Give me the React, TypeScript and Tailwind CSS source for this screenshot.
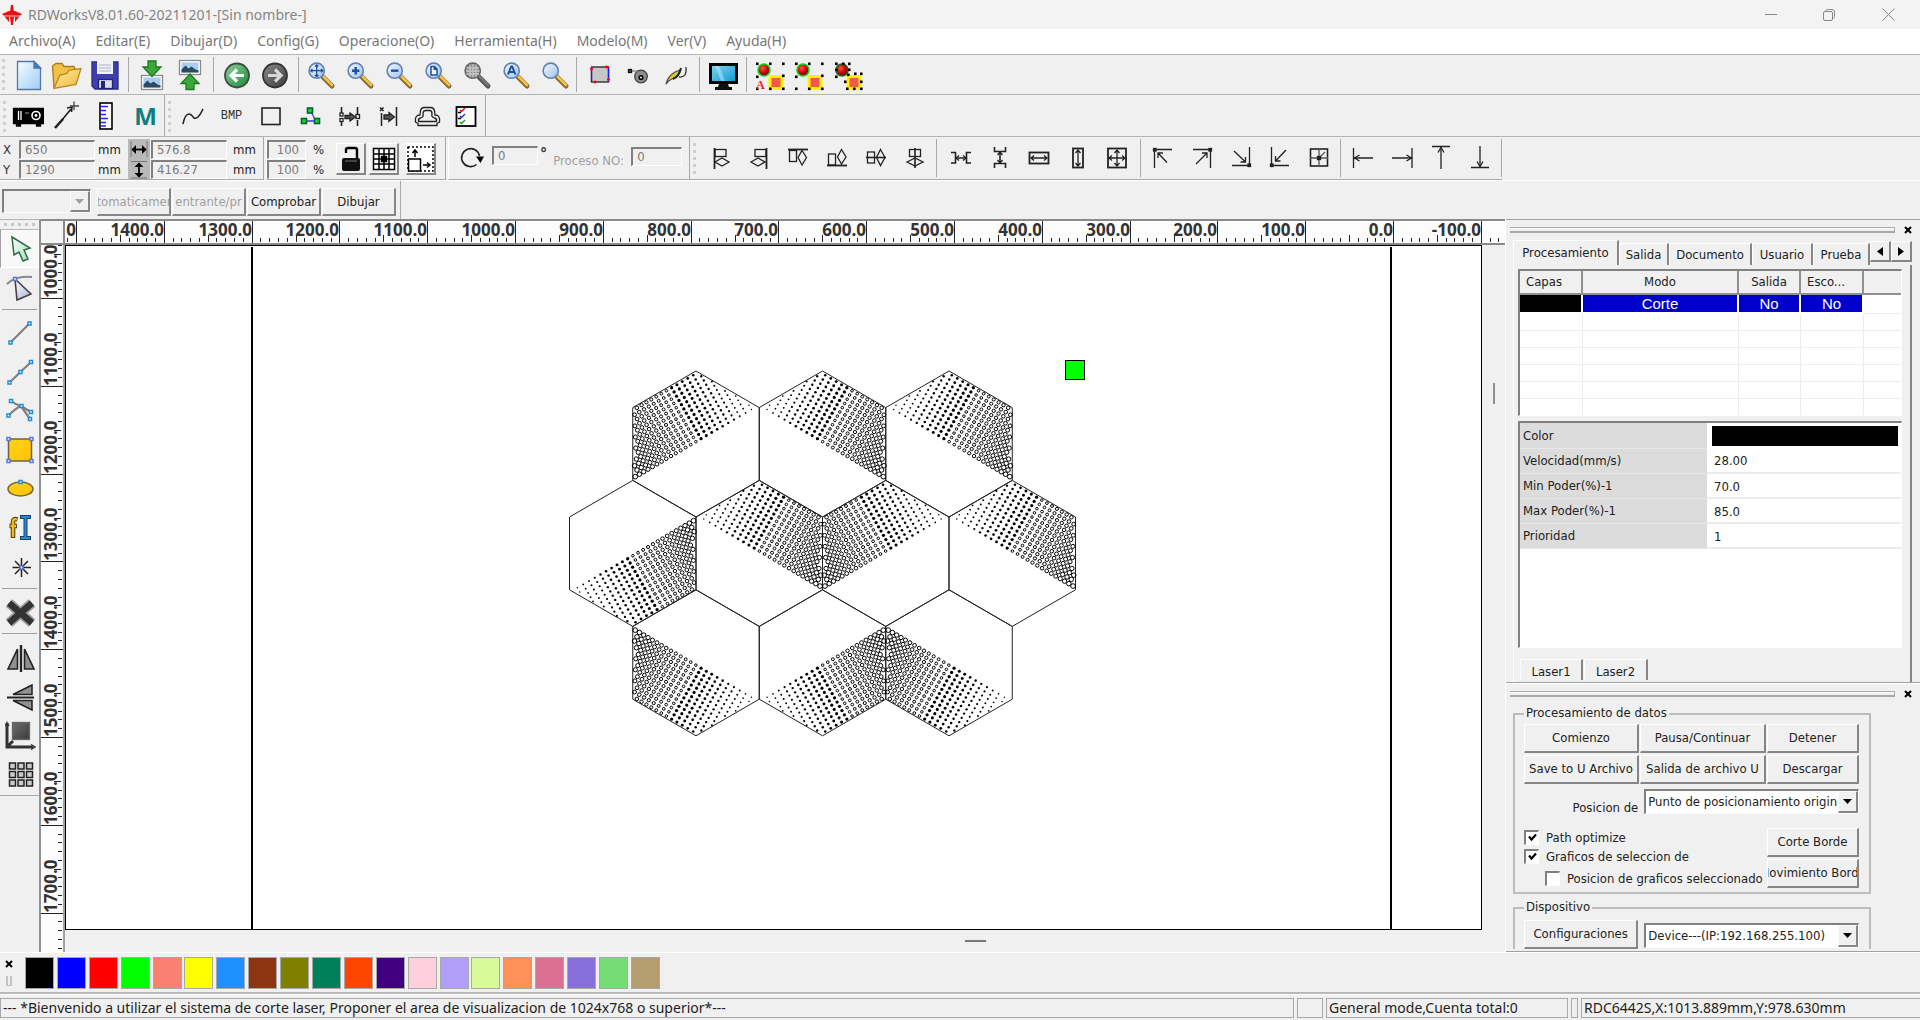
import React, { useState } from "react";

const UI = "font-['DejaVu_Sans_Condensed','DejaVu_Sans',sans-serif]";
const RAISED = "border-t border-l border-t-white border-l-white border-r-2 border-b-2 border-r-[#868686] border-b-[#868686]";
const SUNKEN = "border-t-2 border-l-2 border-t-[#808080] border-l-[#808080] border-r border-b border-r-white border-b-white";

type Kids = { children?: React.ReactNode };

function Icon({ children, size = 32 }: Kids & { size?: number }) {
  return (
    <svg width={size} height={size} viewBox={`0 0 ${size} ${size}`} fill="none" stroke="#222" strokeWidth="1.3" className="block shrink-0">
      {children}
    </svg>
  );
}

function Tool({ label, wide, children }: Kids & { label: string; wide?: boolean }) {
  return (
    <button type="button" aria-label={label} title={label} className={`flex shrink-0 items-center justify-center ${wide ? "w-[39px]" : "w-[38px]"}`}>
      {children}
    </button>
  );
}

function Group({ children, snug }: Kids & { snug?: boolean }) {
  return <div className={`my-[2px] flex border-r border-r-[#a8a8a8] ${snug ? "px-[2px]" : "px-1"}`}>{children}</div>;
}

function Grip({ slim }: { slim?: boolean }) {
  return (
    <div className={`flex shrink-0 flex-col items-center justify-center gap-1 ${slim ? "w-[6px]" : "w-2"}`}>
      {[0, 1, 2, 3, 4].map((i) => <span key={i} className="h-[3px] w-[3px] bg-[#cfcfcf]" />)}
    </div>
  );
}

/* ---------- standard toolbar ---------- */

function Lens({ gray, children }: Kids & { gray?: boolean }) {
  return (
    <Icon>
      <path d="M18 18 L27 27" stroke={gray ? "#555" : "#8a6a2c"} strokeWidth="5" strokeLinecap="round" />
      <path d="M18.5 17.5 L27 26" stroke={gray ? "#777" : "#f3c24d"} strokeWidth="2.6" strokeLinecap="round" />
      <circle cx="11.7" cy="11.7" r="7.6" fill={gray ? "#8e8e8e" : "url(#lensFill)"} stroke={gray ? "#666" : "#6580b8"} strokeWidth="1.6" />
      {children}
    </Icon>
  );
}

function Picture({ y }: { y: number }) {
  return (
    <g>
      <rect x="5.5" y={y + 0.5} width="21" height="14" fill="#fff" stroke="#8a8a8a" />
      <rect x="7.5" y={y + 2.5} width="17" height="10" fill="#a8cdf0" stroke="none" />
      <path d={`M7.5 ${y + 12.5} v-3 l4 -4 l3 3 l3 -2 l4 3 l3 1 v2z`} fill="#2d4a63" stroke="none" />
    </g>
  );
}

function Selection({ kind }: { kind: number }) {
  const near = kind === 2;
  const dots = near
    ? [[5, 5], [12, 5], [18, 5], [5, 11], [18, 11], [5, 18], [17, 16], [24, 15], [30, 15], [14, 23], [30, 23], [16, 30], [23, 30], [30, 30]]
    : [[4, 5], [17, 5], [30, 5], [4, 18], [30, 17], [4, 30], [17, 30], [30, 30]];
  return (
    <Icon>
      <circle cx="11" cy="11" r="6" fill="url(#ball)" stroke={near ? "#1c6a1c" : "#19d119"} strokeWidth="1.6" />
      <rect x="17" y="17.5" width="12" height="12" fill="#f4574b" stroke="#fff200" strokeWidth="3" />
      {dots.map(([x, y]) => <rect key={`${x}-${y}`} x={x - 1} y={y - 1.5} width="2.6" height="2.6" fill="#000" stroke="none" />)}
      {kind === 0 && (
        <text x="3" y="30" fontSize="12" fontWeight="700" fill="#f02020" stroke="none" fontFamily="Liberation Serif, serif">A</text>
      )}
    </Icon>
  );
}

function MainToolbar() {
  return (
    <div className="flex h-[41px] border-t border-b border-t-[#b4b4b4] border-b-[#b4b4b4]">
      <Grip slim />
      <Group>
        <Tool label="Nuevo">
          <Icon>
            <path d="M4.5 2.5 H21 L27.5 9 V30.5 H4.5z" fill="url(#pageFill)" stroke="#5577a8" />
            <path d="M21 2.5 V9 H27.5z" fill="#3f7fd0" stroke="#4472b0" />
          </Icon>
        </Tool>
        <Tool label="Abrir">
          <Icon>
            <path d="M3 29 L1.5 7 L5 4.5 H11 L13 7.5 H23 L24 10" fill="#f1c046" stroke="#a87b1c" />
            <path d="M3 29.5 L9 16 L16 14.5 L18 11 L30 9.5 L25 25.5z" fill="url(#folderFill)" stroke="#b58820" />
          </Icon>
        </Tool>
        <Tool label="Guardar">
          <Icon>
            <path d="M3 3 H29 V30 H6 L3 27z" fill="#3d3fae" stroke="#2a2b86" />
            <rect x="8" y="2" width="16" height="13" fill="#f1f3f8" stroke="none" />
            <path d="M10 6 H22 M10 9 H22 M10 12 H22" stroke="#c4c8d4" />
            <rect x="9.5" y="20.5" width="14" height="9" fill="#d9dcea" stroke="#23246e" />
            <rect x="12" y="22" width="4" height="7" fill="#23246e" stroke="none" />
          </Icon>
        </Tool>
      </Group>
      <Group>
        <Tool label="Importar">
          <Icon>
            <Picture y={16} />
            <path d="M12 2 H20 V8 H25 L16 17.5 L7 8 H12z" fill="#3aa83a" stroke="#1c7a1c" />
          </Icon>
        </Tool>
        <Tool label="Exportar">
          <Icon>
            <Picture y={1} />
            <path d="M12 30.5 H20 V24.5 H25 L16 15 L7 24.5 H12z" fill="#3aa83a" stroke="#1c7a1c" />
          </Icon>
        </Tool>
      </Group>
      <Group>
        <Tool label="Deshacer">
          <Icon>
            <circle cx="16" cy="16.5" r="12" fill="url(#greenDisc)" stroke="#3d4a40" strokeWidth="1.8" />
            <path d="M23 16.5 H11 M16 10.5 L10 16.5 L16 22.5" stroke="#fff" strokeWidth="3.2" />
          </Icon>
        </Tool>
        <Tool label="Rehacer">
          <Icon>
            <circle cx="16" cy="16.5" r="12" fill="url(#grayDisc)" stroke="#333" strokeWidth="1.8" />
            <path d="M9 16.5 H21 M16 10.5 L22 16.5 L16 22.5" stroke="#d8d8d8" strokeWidth="3.2" />
          </Icon>
        </Tool>
      </Group>
      <Group snug>
        <Tool wide label="Mover">
          <Lens><path d="M11.7 6 V17.4 M6 11.7 H17.4 M10 7.5 l1.7 -1.7 l1.7 1.7 M10 16 l1.7 1.7 l1.7 -1.7 M7.5 10 l-1.7 1.7 l1.7 1.7 M16 10 l1.7 1.7 l-1.7 1.7" stroke="#1f4f9e" /></Lens>
        </Tool>
        <Tool wide label="Acercar"><Lens><path d="M11.7 8 V15.4 M8 11.7 H15.4" stroke="#1f4f9e" strokeWidth="2.4" /></Lens></Tool>
        <Tool wide label="Alejar"><Lens><path d="M8 11.7 H15.4" stroke="#1f4f9e" strokeWidth="2.4" /></Lens></Tool>
        <Tool wide label="Ver página"><Lens><path d="M9 7.5 H12.5 L15 10 V16 H9z M12.3 7.5 V10.2 H15" stroke="#1f4f9e" fill="#eef5ff" strokeWidth="1.5" /></Lens></Tool>
        <Tool wide label="Ver datos"><Lens gray><path d="M9 5.5 V18 M12 5 V18.5 M15 5.5 V18 M5.5 9 H18 M5 12 H18.5 M5.5 15 H18" stroke="#c8c8c8" /></Lens></Tool>
        <Tool wide label="Ver todo"><Lens><path d="M8 15.5 L11.2 7.5 H12.2 L15.4 15.5 M9.3 13 H14" stroke="#1f4f9e" strokeWidth="2" /></Lens></Tool>
        <Tool wide label="Zoom"><Lens /></Tool>
      </Group>
      <Group>
        <Tool label="Marco">
          <Icon>
            <rect x="7.5" y="8" width="17" height="15" fill="#c6c6c6" stroke="#222" />
            <path d="M7.5 8 V23 M24.5 8 V23" stroke="#1a1aff" />
            <path d="M6 10 h3 M7.5 8.5 v3 M21 8 h4 M22.5 6.5 v3 M9.500 23 h3 M11 21.500 v3 M23 20.5 h3 M24.5 19 v3" stroke="#f00" />
          </Icon>
        </Tool>
        <Tool label="Velocidad">
          <Icon>
            <circle cx="19" cy="17.5" r="6.3" fill="#8c8c8c" stroke="#444" />
            <circle cx="19" cy="18.5" r="1.8" fill="#eee" stroke="#000" strokeWidth="1.6" />
            <path d="M10 12 H16" stroke="#888" />
            <rect x="6.5" y="10.5" width="3" height="3" fill="#555" stroke="#111" />
          </Icon>
        </Tool>
        <Tool label="Lápiz">
          <Icon>
            <path d="M6 25 Q8 17 15 13 L20 11 Q18 18 12 20 Q9 21 6 25z" fill="#d8cc20" stroke="#555" />
            <path d="M13 20 Q19 18 21 9" stroke="#222" strokeWidth="2" />
            <path d="M19 18 Q27 19 26 8" stroke="#333" />
          </Icon>
        </Tool>
      </Group>
      <Group>
        <Tool label="Vista previa">
          <Icon>
            <rect x="3.5" y="5.5" width="26" height="18" fill="url(#screen)" stroke="#050505" strokeWidth="3" />
            <path d="M12 7 L18 22 H14 L8 7z" fill="#fff" opacity=".35" stroke="none" />
            <path d="M12 25 H21 L22 28 H25 V31 H8 V28 H11z" fill="#111" stroke="none" />
          </Icon>
        </Tool>
      </Group>
      <div className="flex px-[2px]">
        <Tool wide label="Ruta automática"><Selection kind={0} /></Tool>
        <Tool wide label="Ruta manual"><Selection kind={1} /></Tool>
        <Tool wide label="Ruta cercana"><Selection kind={2} /></Tool>
      </div>
    </div>
  );
}

/* ---------- drawing aids toolbar ---------- */

function EditToolbar() {
  return (
    <div className="flex h-[42px] border-b border-b-[#b4b4b4]">
      <div className="flex border-r border-r-[#a8a8a8] pt-[1px]">
        <Grip />
        <Tool wide label="Proyector">
          <Icon>
            <path d="M1.5 8.5 H31.5 V23.5 H28.5 V26 H24.5 V23.5 H8.5 V26 H4.5 V23.5 H1.5z" fill="#000" stroke="#000" />
            <path d="M6.5 11 V20 M9 11 V20" stroke="#fff" />
            <circle cx="24" cy="15.5" r="4" fill="#000" stroke="#fff" strokeWidth="1.6" />
            <circle cx="24" cy="15.5" r="1.4" fill="#fff" stroke="none" />
            <path d="M13 13 h4" stroke="#777" />
          </Icon>
        </Tool>
        <Tool wide label="Punta">
          <Icon>
            <path d="M4 28 L12 19" strokeWidth="2.6" />
            <path d="M11 20 L20 9 M16 8 L21 7 L20.5 12" strokeWidth="1.6" />
            <path d="M23 1.5 V10 M19 6 H28" stroke="#444" />
          </Icon>
        </Tool>
        <Tool wide label="Regla">
          <Icon>
            <rect x="10" y="3" width="12" height="26" fill="#fff" stroke="#000" strokeWidth="1.6" />
            <path d="M11 6.5 h7 M11 10.5 h5 M11 14.5 h5 M11 18.5 h7 M11 22.5 h5 M11 26 h5" stroke="#22f" />
          </Icon>
        </Tool>
        <Tool wide label="Medida">
          <span className="pl-[2px] font-['Open_Sans',sans-serif] text-2xl font-bold text-[#0b8080]">M</span>
        </Tool>
      </div>
      <div className="flex border-r border-r-[#a8a8a8] pt-[1px]">
        <Grip />
        <Tool wide label="Curva"><Icon><path d="M6 24 Q8 14 12 14 Q14 14 17 18 Q21 20 26 9" strokeWidth="1.6" /></Icon></Tool>
        <Tool wide label="BMP"><span className="font-['Liberation_Mono',monospace] text-xs text-[#333]">BMP</span></Tool>
        <Tool wide label="Rectángulo"><Icon><rect x="7" y="8" width="18" height="16.5" strokeWidth="1.6" /></Icon></Tool>
        <Tool wide label="Nodos">
          <Icon>
            <path d="M16 10 L22 21 H10" stroke="#33f" />
            {[[13.5, 8], [7.5, 18.5], [20.5, 18.5]].map(([x, y]) => <rect key={x} x={x} y={y} width="5" height="5" fill="#1fd01f" stroke="#063" strokeWidth="1.6" />)}
          </Icon>
        </Tool>
        <Tool wide label="Unir">
          <Icon>
            <path d="M8.5 7 V13 M8.5 20 V26 M24.5 7 V14 M24.5 20 V26" strokeWidth="1.6" />
            <rect x="7" y="13" width="3" height="3" fill="#fff" /><rect x="7" y="18.5" width="3" height="3" fill="#fff" /><rect x="23" y="14.5" width="3.5" height="4" />
            <path d="M12 15.5 H17 V13 L22.5 17 L17 21 V18.5 H12z" fill="#555" />
          </Icon>
        </Tool>
        <Tool wide label="Desplazar">
          <Icon>
            <path d="M9.5 13 V26 M24.5 7 V26 M8 7.5 l3.5 3.5 M11.5 7.5 l-3.5 3.5" strokeWidth="1.5" />
            <path d="M12 15 H17 V12.5 L22.5 17 L17 21.5 V19 H12z" fill="#555" />
          </Icon>
        </Tool>
        <Tool wide label="Contorno">
          <Icon>
            <path d="M9 15 Q9 7.500 13 7.500 H20 Q24 7.500 24 15 Q29.500 15 28.500 22 L26 23.500 V25.500 H7 V23.500 L4.500 22 Q3.500 15 9 15z" />
            <path d="M9.500 18 Q13 17 12 13.500 Q12 10.500 15 10.500 H18.500 Q21 10.500 21 13.500 Q20 17 23.500 18 Q26 18.500 25.500 21.500 H7.500 Q7 18.500 9.500 18z" />
          </Icon>
        </Tool>
        <Tool wide label="Lista">
          <Icon>
            <rect x="6.500" y="7" width="19" height="19" fill="#fff" stroke="#000" strokeWidth="1.8" />
            <path d="M10 10 l1.500 1.500 l3.500 -3.500" stroke="#e00" /><path d="M10 16 l1.500 1.500 l3.500 -3.500" stroke="#22f" /><path d="M10 22 l1.500 1.500 l3.500 -3.500" stroke="#0a0" />
            <path d="M8 12.500 h3 M8 18.500 h3" stroke="#000" />
          </Icon>
        </Tool>
      </div>
    </div>
  );
}

/* ---------- coordinates and alignment ---------- */

function Field({ label, value, w }: { label: string; value: string; w: string }) {
  return (
    <input aria-label={label} defaultValue={value} className={`${w} ${SUNKEN} h-[19px] min-w-0 bg-[#f0f0f0] px-1 text-[13px] leading-none text-[#7b7b7b] outline-none`} />
  );
}

function Pair({ children, className = "" }: Kids & { className?: string }) {
  return <div className={`grid auto-rows-[19px] gap-[1px] leading-[19px] ${className}`}>{children}</div>;
}

function ArrowHead({ x, y, dx, dy }: { x: number; y: number; dx: number; dy: number }) {
  return <path d={`M${x - dx * 5 + dy * 3} ${y - dy * 5 + dx * 3} L${x} ${y} L${x - dx * 5 - dy * 3} ${y - dy * 5 - dx * 3}`} />;
}

const ALIGN_ICONS: [string, React.ReactNode][] = [
  ["Alinear izquierda", <><path d="M10.500 6 V27" strokeWidth="1.8" /><rect x="11" y="7.500" width="11" height="7" /><path d="M11 20 L18 16 L25 20 L18 24z" /></>],
  ["Alinear derecha", <><path d="M23.500 6 V27" strokeWidth="1.8" /><rect x="12" y="7.500" width="11" height="7" /><path d="M8 20 L15 16 L22 20 L15 24z" /></>],
  ["Alinear arriba", <><path d="M6 7.500 H26" strokeWidth="1.8" /><rect x="7.500" y="8.500" width="7" height="11" /><path d="M20 8.500 L24.500 15.500 L20 23 L16 15.500z" /></>],
  ["Alinear abajo", <><path d="M6 23.500 H26" strokeWidth="1.8" /><rect x="7.500" y="12" width="7" height="11" /><path d="M20.500 7.500 L25 15 L20.500 22 L16.500 15z" /></>],
  ["Centrar horizontal", <><path d="M6 15.500 H26" strokeWidth="1.6" /><rect x="7.500" y="10" width="7" height="11" /><path d="M20.500 7.500 L25 15.500 L20.500 23.500 L16.500 15.500z" /></>],
  ["Centrar vertical", <><path d="M16 6 V26" strokeWidth="1.600" /><rect x="10.500" y="7.500" width="11" height="7" /><path d="M8 20 L16 16 L24 20 L16 24z" /></>],
];

const SPACE_ICONS: [string, React.ReactNode][] = [
  ["Distribuir horizontal", <><path d="M6 10.500 H10.500 V21 H6 M26 10.500 H21.500 V21 H26 M11 16 H21" strokeWidth="1.600" /><path d="M14 13.500 L11 16 L14 18.500 M18 13.500 L21 16 L18 18.500" /></>],
  ["Distribuir vertical", <><path d="M10.500 5 V9.500 H21.500 V5 M10.500 26 V21.500 H21.500 V26 M16 10 V21" strokeWidth="1.600" /><path d="M13.500 13 L16 10 L18.500 13 M13.500 18 L16 21 L18.500 18" /></>],
  ["Mismo ancho", <><rect x="6.500" y="10.500" width="19" height="11" strokeWidth="1.800" /><path d="M8 16 H24 M11 13.500 L8 16 L11 18.500 M21 13.500 L24 16 L21 18.500" /></>],
  ["Mismo alto", <><rect x="11" y="6.500" width="10" height="19" strokeWidth="1.800" /><path d="M16 8 V24 M13.500 11 L16 8 L18.500 11 M13.500 21 L16 24 L18.500 21" /></>],
  ["Mismo tamaño", <><rect x="7" y="6.500" width="18" height="19" strokeWidth="1.800" /><path d="M16 8 V24 M8 16 H24 M13.500 11 L16 8 L18.500 11 M13.500 21 L16 24 L18.500 21 M11 13.500 L8 16 L11 18.500 M21 13.500 L24 16 L21 18.500" /></>],
];

const CORNER_ICONS: [string, React.ReactNode][] = [
  ["Esquina superior izquierda", <><path d="M7.500 26 V7.500 H25" /><path d="M20 20.500 L11 11 M11 16 V11 H16" /><rect x="6.500" y="6.500" width="2.500" height="2.500" fill="#222" /></>],
  ["Esquina superior derecha", <><path d="M24.500 26 V7.500 H7" /><path d="M10 22 L21 11 M16 11 H21 V16" /><rect x="23" y="6.500" width="2.500" height="2.500" fill="#222" /></>],
  ["Esquina inferior derecha", <><path d="M24.500 5 V23.500 H7" /><path d="M9 9 L20.500 20 M20.500 15 V20 H15.500" /><rect x="23" y="22" width="2.500" height="2.500" fill="#222" /></>],
  ["Esquina inferior izquierda", <><path d="M7.500 5 V23.500 H25" /><path d="M22 8 L11.500 19 M11.500 14 V19 H16.500" /><rect x="6.500" y="22" width="2.500" height="2.500" fill="#222" /></>],
  ["Centro", <><rect x="7.500" y="7" width="17" height="17" strokeWidth="1.600" /><path d="M16 7 V24 M7 16 H25 M22 10 L16 16" stroke="#555" /><rect x="14.500" y="14.500" width="3" height="3" fill="#222" /></>],
];

const EDGE_ICONS: [string, React.ReactNode][] = [
  ["Borde izquierdo", <><path d="M6.500 6 V26 M7 16 H26" /><ArrowHead x={7.500} y={16} dx={-1} dy={0} /></>],
  ["Borde derecho", <><path d="M26 6 V26 M6 16 H26" /><ArrowHead x={25.500} y={16} dx={1} dy={0} /></>],
  ["Borde superior", <><path d="M7 4.500 H25 M16 5 V27" /><ArrowHead x={16} y={5.500} dx={0} dy={-1} /></>],
  ["Borde inferior", <><path d="M7 25.500 H25 M16 4 V25" /><ArrowHead x={16} y={24.500} dx={0} dy={1} /></>],
];

function CoordBar() {
  return (
    <div className={`${UI} flex h-[43px] text-[13px]`}>
      <div className="flex items-center border-r border-b border-[#a8a8a8] pt-[2px] pl-[3px]">
        <Pair className="w-4 text-[#333]"><span>X</span><span>Y</span></Pair>
        <Pair><Field label="X" value="650" w="w-[76px]" /><Field label="Y" value="1290" w="w-[76px]" /></Pair>
        <Pair className="w-[33px] pl-[3px]"><span>mm</span><span>mm</span></Pair>
        <div className="grid h-10 w-[22px] bg-[#b9b9b9]">
          <svg width="22" height="40" viewBox="0 0 22 40" fill="none" stroke="#000" strokeWidth="1.8">
            <path d="M3 2 V18 M19 2 V18" stroke="#777" strokeWidth="1" />
            <path d="M4 10.500 H18" /><path d="M8 6 L3.500 10.500 L8 15z M14 6 L18.500 10.500 L14 15z" fill="#000" stroke="none" />
            <path d="M3 22.500 H19 M3 39 H19" stroke="#777" strokeWidth="1" />
            <path d="M11 24 V38" /><path d="M6.500 28 L11 23.500 L15.500 28z M6.500 34 L11 38.500 L15.500 34z" fill="#000" stroke="none" />
          </svg>
        </div>
        <Pair className="ml-[1px]"><Field label="Ancho" value="576.8" w="w-[76px]" /><Field label="Alto" value="416.27" w="w-[76px]" /></Pair>
        <Pair className="w-9 pl-[6px]"><span>mm</span><span>mm</span></Pair>
      </div>
      <div className="ml-[2px] flex items-center border-r border-b border-l border-r-[#a8a8a8] border-b-[#a8a8a8] border-l-white pt-[2px]">
        <Pair><Field label="Escala X" value=" 100" w="w-[39px]" /><Field label="Escala Y" value=" 100" w="w-[39px]" /></Pair>
        <Pair className="w-[30px] pl-[7px]"><span>%</span><span>%</span></Pair>
        <div className="flex gap-[3px] pr-[9px]">
          <button type="button" aria-label="Bloquear" className={`${RAISED} flex h-8 w-[30px] items-center justify-center`}>
            <svg width="22" height="28" viewBox="0 0 22 28"><path d="M6 8 V4.500 Q6 3 8 3 H15 Q17 3 17 5 V14" fill="none" stroke="#000" strokeWidth="2.400" /><rect x="2" y="13" width="18" height="13" rx="2" fill="#111" /><path d="M5 16 H17" stroke="#777" /></svg>
          </button>
          <button type="button" aria-label="Punto de origen" className={`${RAISED} flex h-8 w-[30px] items-center justify-center`}>
            <svg width="24" height="24" viewBox="0 0 24 24" fill="none" stroke="#000" strokeWidth="1.500"><rect x="1.500" y="1.500" width="21" height="21" fill="#fff" /><path d="M7 1.500 V22.500 M12 1.500 V22.500 M17 1.500 V22.500 M1.500 7 H22.500 M1.500 12 H22.500 M1.500 17 H22.500" /><rect x="9.500" y="9.500" width="5" height="5" fill="#000" /></svg>
          </button>
          <button type="button" aria-label="Tamaño" className={`${RAISED} ml-1 flex h-8 w-[30px] items-center justify-center bg-white`}>
            <svg width="27" height="28" viewBox="0 0 27 28" fill="none" stroke="#000" strokeWidth="1.500"><path d="M1 2 H26 V26 H1z" strokeDasharray="2 2" /><rect x="1.500" y="14" width="12" height="12" fill="#fff" /><path d="M8 12 V5 M5.500 8 L8 5 L10.500 8 M16 20 H23 M20 17.500 L23 20 L20 22.500" /></svg>
          </button>
        </div>
      </div>
      <div className="ml-[2px] flex items-center border-r border-b border-l border-r-[#a8a8a8] border-b-[#a8a8a8] border-l-white">
        <button type="button" aria-label="Girar" className="ml-[5px] flex w-9 justify-center">
          <Icon><path d="M20.500 22.500 A9 9 0 1 1 23.500 14" strokeWidth="1.600" /><path d="M20 14.500 H28 L24.500 21z" fill="#000" stroke="none" /></Icon>
        </button>
        <div className="ml-[2px] mb-[6px] flex items-start"><Field label="Ángulo" value="0" w="w-[46px]" /><span className="pl-[2px] text-base leading-4 font-bold text-[#333]">°</span></div>
        <span className="mt-[6px] ml-[6px] w-[78px] whitespace-nowrap text-[#a0a0a0]">Proceso NO:</span>
        <div className="mb-[3px] pr-[7px]"><Field label="Proceso NO" value="0" w="w-[51px]" /></div>
      </div>
      <div className="flex border-b border-b-[#a8a8a8]">
        <Grip />
        <Group snug>{ALIGN_ICONS.map(([l, n]) => <Tool wide key={l} label={l}><Icon>{n}</Icon></Tool>)}</Group>
        <Group>{SPACE_ICONS.map(([l, n]) => <Tool wide key={l} label={l}><Icon>{n}</Icon></Tool>)}</Group>
        <Group snug>{CORNER_ICONS.map(([l, n]) => <Tool wide key={l} label={l}><Icon>{n}</Icon></Tool>)}</Group>
        <Group snug>{EDGE_ICONS.map(([l, n]) => <Tool wide key={l} label={l}><Icon>{n}</Icon></Tool>)}</Group>
      </div>
    </div>
  );
}

function Push({ children, className = "", dim }: Kids & { className?: string; dim?: boolean }) {
  return (
    <button type="button" disabled={dim} className={`${RAISED} flex items-center justify-center overflow-hidden text-[13px] whitespace-nowrap ${dim ? "text-[#a0a0a0]" : "text-[#222]"} ${className}`}>
      {children}
    </button>
  );
}

function Drop({ label, value, className, dim }: { label: string; value?: string; className: string; dim?: boolean }) {
  return (
    <div className={`relative ${SUNKEN} ${dim ? "bg-[#f0f0f0]" : "bg-white"} ${className}`}>
      <select aria-label={label} disabled={dim} className="h-full w-full appearance-none overflow-hidden bg-transparent pr-5 pl-[2px] text-[13px] text-[#222] outline-none">
        <option>{value ?? ""}</option>
      </select>
      <span className={`${RAISED} pointer-events-none absolute top-0 right-0 bottom-0 flex w-5 items-center justify-center bg-[#f0f0f0]`}>
        <svg width="9" height="5" viewBox="0 0 9 5"><path d="M0 0 H9 L4.500 5z" fill={dim ? "#a0a0a0" : "#000"} /></svg>
      </span>
    </div>
  );
}

function PathBar() {
  return (
    <div className={`${UI} flex h-[39px] border-t border-t-white`}>
      <div className="flex items-end gap-[1px] border-r border-r-[#a8a8a8] pr-1 pb-[3px] pl-[2px]">
        <Drop dim label="Modo" className="mr-[5px] mb-[3px] h-6 w-[89px]" />
        <Push dim className="h-7 w-[74px]">Automaticamente</Push>
        <Push dim className="h-7 w-[74px]">entrante/pr</Push>
        <Push className="h-7 w-[74px]">Comprobar</Push>
        <Push className="h-7 w-[74px]">Dibujar</Push>
      </div>
    </div>
  );
}

/* ---------- left tool column ---------- */

function Node({ x, y, c = "#1c8fd6" }: { x: number; y: number; c?: string }) {
  return <rect x={x - 1.500} y={y - 1.500} width="3" height="3" fill="#fff" stroke={c} strokeWidth="1.500" />;
}

const SIDE: [string, React.ReactNode][][] = [
  [
    ["Seleccionar", <path d="M8 4 L26 15 L20 17 L24 26 L19 28 L15 19 L10 22z" fill="url(#cursor)" stroke="#2f6b45" strokeWidth="1.500" />],
    ["Editar nodos", <><path d="M3 12 Q12 3 28 5" stroke="#888" strokeWidth="2" /><path d="M11 7 L27 22 L13 28z" fill="url(#cursorBlue)" stroke="#444" strokeWidth="1.600" /><Node x={11} y={7} c="#5878d8" /></>],
  ],
  [
    ["Línea", <><path d="M7 25 L25 7" stroke="#808080" strokeWidth="2.200" /><Node x={6.500} y={25.500} /><Node x={25.500} y={6.500} /></>],
    ["Polilínea", <><path d="M6 26 L27 6" stroke="#808080" strokeWidth="2.200" /><Node x={5.500} y={26.500} /><Node x={16.500} y={16} /><Node x={27} y={6} /></>],
    ["Curva", <><path d="M5 20 Q12 13 17 11 M7 6 Q12 10 17 11 Q22 14 27 17 M17 11 L26 24" stroke="#808080" strokeWidth="2.200" /><Node x={4.500} y={20.500} /><Node x={7} y={6} /><Node x={17.500} y={11} /><Node x={27} y={17} /><Node x={26} y={24} /></>],
    ["Rectángulo", <><rect x="4.500" y="5" width="23" height="22" fill="url(#gold)" stroke="#6b6250" strokeWidth="1.500" /><Node x={4.500} y={5} c="#5878d8" /><Node x={27.500} y={5} c="#5878d8" /><Node x={4.500} y={27} c="#5878d8" /><Node x={27.500} y={27} c="#5878d8" /></>],
    ["Elipse", <><ellipse cx="16.500" cy="16" rx="12.500" ry="7" fill="url(#gold)" stroke="#7a6a30" strokeWidth="1.500" /><Node x={16.500} y={9} /></>],
    ["Texto", <><path d="M13.500 7.500 Q9 6 9 10 V26 M5.500 14 H13" stroke="#5b4a10" strokeWidth="4.600" /><path d="M13 7.500 Q9 6 9 10 V25 M6.500 14 H12" stroke="#f2b91d" strokeWidth="2.400" /><path d="M16 5 H27 M21.500 5 V26 M16 26 H27" stroke="#1e3c66" strokeWidth="4" /><path d="M17 5 H26 M21.500 5 V26 M17 26 H26" stroke="#1d8fd8" strokeWidth="2" /></>],
    ["Punto", <><path d="M17.500 7 V26 M8.500 16.500 H27 M11 10 L24 23 M24 10 L11 23" strokeWidth="1.500" /><Node x={17.500} y={16.500} c="#5878d8" /></>],
  ],
  [
    ["Borrar", <><path d="M5 7 L28 27 M28 7 L5 27" stroke="#999" strokeWidth="10" /><path d="M5 7 L28 27 M28 7 L5 27" stroke="#333" strokeWidth="6.500" /></>],
  ],
  [
    ["Espejo horizontal", <><path d="M13.500 8 V28 H4z M20.500 8 V28 H30z" fill="#909090" strokeWidth="1.600" /><path d="M17 4 V31" strokeWidth="2.400" /></>],
    ["Espejo vertical", <><path d="M28 5 V14.500 H9z M28 30 V20.500 H9z" fill="#909090" strokeWidth="1.500" /><path d="M3 17.500 H30" strokeWidth="2" /></>],
    ["Escala", <><rect x="8.500" y="3.500" width="17" height="17" fill="url(#darkBox)" stroke="#666" /><path d="M3 4 V28 H29 M3 28 L9 22" stroke="#333" strokeWidth="3" /><path d="M1.500 7 L3 3.500 L5 7 M27 25.500 L31 28 L27 30.500" stroke="#333" /></>],
    ["Matriz", <>{[5.500, 14, 22.500].map((x) => [5, 13.500, 22].map((y) => <rect key={`${x}-${y}`} x={x} y={y} width="6" height="6" fill="#ccc" stroke="#222" strokeWidth="1.500" />))}</>],
  ],
];

function SideTools() {
  const [active, setActive] = useState("Seleccionar");
  return (
    <div className="flex w-[41px] shrink-0 flex-col border-t border-r-2 border-t-[#b4b4b4] border-r-[#909090]">
      <div className="flex h-[9px] items-center justify-center gap-1">
        {[0, 1, 2, 3, 4].map((i) => <span key={i} className="h-[3px] w-[3px] bg-[#c8c8c8]" />)}
      </div>
      <div className="flex flex-col gap-[6px] border-b border-b-[#a8a8a8] pb-[2px]">
        {SIDE.map((g, i) => (
          <div key={i} className={`flex flex-col ${i ? "relative before:absolute before:-top-1 before:right-0.5 before:left-0.5 before:h-px before:bg-[#a0a0a0]" : ""}`}>
            {g.map(([l, n]) => (
              <button key={l} type="button" aria-label={l} title={l} onClick={() => setActive(l)} className={`flex h-[39px] items-center justify-center ${active === l ? "border border-t-[#b8b8b8] border-r-white border-b-white border-l-[#a0a0a0] bg-[#f8f8f8]" : ""}`}>
                <Icon>{n}</Icon>
              </button>
            ))}
          </div>
        ))}
      </div>
    </div>
  );
}

/* ---------- rulers ---------- */

const STEP = 87.8;

function ruleTicks(first: number, n: number) {
  const out: { pos: number; kind: number; i: number }[] = [];
  for (let i = -10; i < n * 10 + 10; i++) {
    const m = ((i % 10) + 10) % 10;
    out.push({ pos: Math.round(first + (i * STEP) / 10), kind: m === 0 ? 2 : m === 5 ? 1 : 0, i: i / 10 });
  }
  return out;
}

function TopRuler() {
  return (
    <svg className="block h-[22px] min-w-0 flex-1 bg-[#fcfcfc]" shapeRendering="crispEdges">
      {ruleTicks(11, 16).map(({ pos, kind, i }) => (
        <g key={i}>
          <rect x={pos} y={kind === 2 ? 0 : kind === 1 ? 14 : 17} width="1" height={kind === 2 ? 22 : kind === 1 ? 7 : 4} fill="#222" />
          {kind === 2 && i >= 0 && i <= 16 && (
            <text x={pos} y="15" textAnchor="end" fontSize="17" fontWeight="700" fill="#333" fontFamily="Open Sans, sans-serif">{i === 0 ? "0" : (1500 - i * 100).toFixed(1)}</text>
          )}
        </g>
      ))}
    </svg>
  );
}

function LeftRuler() {
  return (
    <svg className="block h-full w-[22px] shrink-0 bg-[#fcfcfc]" shapeRendering="crispEdges">
      {ruleTicks(53, 8).map(({ pos, kind, i }) => (
        <g key={i}>
          <rect y={pos} x={kind === 2 ? 0 : kind === 1 ? 13 : 17} height="1" width={kind === 2 ? 22 : kind === 1 ? 7 : 4} fill="#222" />
          {kind === 2 && i >= 0 && i < 8 && (
            <text x="16" y={pos} transform={`rotate(-90 16 ${pos})`} fontSize="17" fontWeight="700" fill="#333" fontFamily="Open Sans, sans-serif">{(1000 + i * 100).toFixed(1)}</text>
          )}
        </g>
      ))}
    </svg>
  );
}

/* ---------- drawing ---------- */

const HEX_W = 63.250;
const HEXES: [number, number, number, number][] = [
  [696, 444, 1, 1], [822.500, 444, -1, 1], [949, 444, -1, 1],
  [632.750, 553.400, -1, -1], [759.250, 553.400, -1, 1], [885.750, 553.400, 1, 1], [1012.250, 553.400, -1, 1],
  [696, 662.800, 1, -1], [822.500, 662.800, -1, -1], [949, 662.800, 1, -1],
];

/* Dots fill the half of the hexagon above the diagonal running from the
   lower-left to the upper-right corner, growing toward the lower left. */
function halftone() {
  const dots: { x: number; y: number; r: number }[] = [];
  const ux = Math.cos(Math.PI / 6), uy = -0.5;
  const nx = -0.5, ny = -ux;
  for (let row = 0; row < 13; row++) {
    for (let col = 0; col < 25; col++) {
      const s = 4 + col * 4.800 + col * col * 0.045;
      const d = 2 + row * 4.900;
      const x = -HEX_W + ux * s + nx * d;
      const y = 36.400 + uy * s + ny * d;
      if (x < -HEX_W + 1.500) continue;
      if (y < -73 + (Math.abs(x) * 36.500) / HEX_W + 1) continue;
      dots.push({ x, y, r: Math.max(0.300, 2.500 - (s / 146) * 2.200) });
    }
  }
  return dots;
}

const DOTS = halftone();

function Drawing() {
  return (
    <svg className="block h-full w-full">
      <g transform="translate(-67 -247)">
        <path d="M251.500 240 V1400 M1391 240 V1400" stroke="#000" strokeWidth="2" shapeRendering="crispEdges" />
        {HEXES.map(([cx, cy, sx, sy], k) => (
          <g key={k} transform={`translate(${cx} ${cy}) scale(${sx} ${sy})`}>
            <path d="M0 -73 L63.250 -36.400 V36.400 L0 73 L-63.250 36.400 V-36.400z" fill="none" stroke="#222" strokeWidth="1" />
            {DOTS.map((p, j) =>
              p.r > 1.350
                ? <circle key={j} cx={p.x} cy={p.y} r={p.r - 0.100} fill="none" stroke="#000" strokeWidth="1" />
                : <circle key={j} cx={p.x} cy={p.y} r={p.r + 0.350} fill="#000" />
            )}
          </g>
        ))}
        <rect x="1065.500" y="360.500" width="19" height="19" fill="#0f0" stroke="#000" />
      </g>
    </svg>
  );
}

function Workspace() {
  return (
    <div className="flex min-w-0 flex-1 flex-col border-t-2 border-t-[#8a8a8a]">
      <div className="flex border-b-2 border-b-[#8a8a8a]">
        <div className="w-[22px] shrink-0 bg-[#f4f4f4]" />
        <div className="w-[2px] shrink-0 bg-[#8a8a8a]" />
        <TopRuler />
      </div>
      <div className="flex min-h-0 flex-1">
        <LeftRuler />
        <div className="w-[2px] shrink-0 bg-[#a0a0a0]" />
        <div className="flex min-w-0 flex-1 flex-col">
          <div className="flex min-h-0 flex-1">
            <div className="min-w-0 flex-1 border-t border-r border-b border-l border-black bg-white pt-px pl-px"><Drawing /></div>
            <div className="flex w-[23px] justify-center pt-[138px]"><div className="h-[21px] w-[2px] bg-[#909090]" /></div>
          </div>
          <div className="flex h-[22px] items-center"><div className="ml-[62.5%] h-[2px] w-[21px] bg-[#777]" /></div>
        </div>
      </div>
    </div>
  );
}

/* ---------- right dock ---------- */

function DockHandle() {
  return (
    <div className="flex h-5 items-center gap-2 pr-[7px] pl-1">
      <div className="flex h-[6px] flex-1 flex-col justify-between border-r border-r-[#a8a8a8]">
        <div className="border-t border-b border-t-[#a8a8a8] border-b-white" />
        <div className="border-t border-b border-t-[#a8a8a8] border-b-[#a8a8a8]" />
      </div>
      <button type="button" aria-label="Cerrar panel" className="flex w-[10px] justify-center">
        <svg width="8" height="8" viewBox="0 0 8 8"><path d="M1 1 L7 7 M7 1 L1 7" stroke="#000" strokeWidth="2" /></svg>
      </button>
    </div>
  );
}

const TABS: [string, string][] = [["Salida", "w-[50px]"], ["Documento", "w-[83px]"], ["Usuario", "w-[61px]"], ["Prueba", "w-[57px]"]];
const TAB = "border-t border-l border-r-2 border-t-white border-l-white border-r-[#868686] whitespace-nowrap";

const PARAMS: [string, string][] = [
  ["Velocidad(mm/s)", "28.00"], ["Min Poder(%)-1", "70.0"], ["Max Poder(%)-1", "85.0"], ["Prioridad", "1"],
];

function LayerPanel() {
  return (
    <section className="flex h-[464px] flex-col border-t border-b border-t-[#a0a0a0] border-b-[#a0a0a0]">
      <DockHandle />
      <div className="ml-[7px] flex h-[25px] items-end" role="tablist">
        <button type="button" role="tab" aria-selected="true" className={`${TAB} h-[25px] w-[106px]`}>Procesamiento</button>
        {TABS.map(([t, w]) => <button type="button" role="tab" key={t} className={`${TAB} ${w} h-[22px]`}>{t}</button>)}
        <div className="mb-[3px] flex">
          <button type="button" aria-label="Anterior" className={`${RAISED} flex h-[21px] w-[21px] items-center justify-center`}><svg width="6" height="9" viewBox="0 0 6 9"><path d="M6 0 V9 L0 4.500z" /></svg></button>
          <button type="button" aria-label="Siguiente" className={`${RAISED} flex h-[21px] w-[21px] items-center justify-center`}><svg width="6" height="9" viewBox="0 0 6 9"><path d="M0 0 V9 L6 4.500z" /></svg></button>
        </div>
      </div>
      <div className="mr-2 ml-[7px] flex min-h-0 flex-1 flex-col border-r-2 border-l border-r-[#868686] border-l-white px-1 pt-1 pr-2">
        <div className={`${SUNKEN} h-[147px] shrink-0 overflow-hidden bg-white`}>
          <table className="w-full table-fixed border-collapse">
            <colgroup><col className="w-[62px]" /><col /><col className="w-[62px]" /><col className="w-[63px]" /><col className="w-[38px]" /></colgroup>
            <thead>
              <tr className="h-[23px]">
                {["Capas", "Modo", "Salida", "Esco...", ""].map((h) => (
                  <th key={h} className={`border-r-2 border-b-2 border-[#909090] bg-[#f0f0f0] p-0 leading-5 font-normal last:border-r-0 ${h === "Capas" || h === "Esco..." ? "pl-[6px] text-left" : "text-center"}`}>{h}</th>
                ))}
              </tr>
            </thead>
            <tbody>
              <tr className="h-[19px] leading-[15px] text-white">
                <td className="border-2 border-l-0 border-white bg-black p-0" />
                {["Corte", "No", "No"].map((t, i) => <td key={i} className="border-2 border-white bg-[#0000cc] p-0 text-center font-['Liberation_Sans',sans-serif] text-[15px]">{t}</td>)}
                <td className="p-0" />
              </tr>
              {[0, 1, 2, 3, 4, 5].map((r) => (
                <tr key={r} className="h-[17px]">{[0, 1, 2, 3, 4].map((c) => <td key={c} className="border border-[#ececec] p-0 first:border-l-0 last:border-r-0" />)}</tr>
              ))}
            </tbody>
          </table>
        </div>
        <div className={`${SUNKEN} mt-[5px] h-[227px] shrink-0 bg-white`}>
          <table className="w-full table-fixed border-collapse">
            <colgroup><col className="w-[187px]" /><col /></colgroup>
            <tbody>
              <tr className="h-[25px]">
                <th scope="row" className="border-b border-b-[#e8e8e8] bg-[#dcdcdc] p-0 pl-[3px] text-left font-normal">Color</th>
                <td className="p-0 pt-[2px] pr-[3px] pb-[2px] pl-[5px]"><button type="button" aria-label="Color de capa" className="block h-5 w-full bg-black" /></td>
              </tr>
              {PARAMS.map(([k, v]) => (
                <tr key={k} className="h-[25px]">
                  <th scope="row" className="border-b border-b-[#e8e8e8] bg-[#dcdcdc] p-0 pl-[3px] text-left font-normal whitespace-nowrap">{k}</th>
                  <td className="border-b-2 border-b-[#ececec] p-0 pt-[2px] pl-[7px]">{v}</td>
                </tr>
              ))}
            </tbody>
          </table>
        </div>
        <div className="mt-[11px] ml-[2px] flex h-[21px] shrink-0 gap-[1px]">
          <button type="button" className={`${TAB} w-[63px] pt-[2px]`}>Laser1</button>
          <button type="button" className={`${TAB} w-[64px] pt-[2px]`}>Laser2</button>
        </div>
      </div>
    </section>
  );
}

function Check({ label, on, className = "" }: { label: string; on?: boolean; className?: string }) {
  return (
    <label className={`flex h-[19px] items-center gap-[7px] whitespace-nowrap ${className}`}>
      <input type="checkbox" defaultChecked={on} className={`${SUNKEN} peer h-[15px] w-[15px] shrink-0 appearance-none bg-white`} />
      <svg width="9" height="9" viewBox="0 0 9 9" className="pointer-events-none relative -ml-[18px] mr-[2px] hidden peer-checked:block"><path d="M1 3.500 L3.500 6.500 L8 1.500" fill="none" stroke="#000" strokeWidth="2.200" /></svg>
      <span>{label}</span>
    </label>
  );
}

const BOX = "mr-[49px] ml-[7px] border-2 border-[#bdbdbd]";

function WorkPanel() {
  return (
    <section className="flex min-h-0 flex-1 flex-col overflow-hidden border-t border-b border-t-white border-b-[#a0a0a0]">
      <DockHandle />
      <fieldset className={`${BOX} pr-[10px] pb-1 pl-[9px]`}>
        <legend className="h-[19px] px-[2px] leading-[17px]">Procesamiento de datos</legend>
        <div className="mt-[1px] grid grid-cols-[115fr_126fr_92fr] gap-x-[1px] gap-y-[2px]">
          {["Comienzo", "Pausa/Continuar", "Detener", "Save to U Archivo", "Salida de archivo U", "Descargar"].map((t) => <Push key={t} className="h-[29px]">{t}</Push>)}
        </div>
        <div className="mt-[5px] grid grid-cols-[115fr_216fr] gap-x-[6px]">
          <span className="pt-[9px] text-right leading-5">Posicion de</span>
          <Drop label="Posicion de" value="Punto de posicionamiento origin" className="h-[25px]" />
        </div>
        <div className="mt-[10px] flex justify-between">
          <div className="min-w-0">
            <Check on label="Path optimize" />
            <Check on label="Graficos de seleccion de" />
            <Check label="Posicion de graficos seleccionado" className="mt-[3px] ml-[21px]" />
          </div>
          <div className="flex w-[92px] shrink-0 flex-col gap-[2px]">
            <Push className="h-[29px]">Corte Borde</Push>
            <Push className="h-[29px]">Movimiento Borde</Push>
          </div>
        </div>
      </fieldset>
      <fieldset className={`${BOX} mt-1 border-b-0 pr-[10px] pl-[9px]`}>
        <legend className="h-[19px] px-[2px] leading-[17px]">Dispositivo</legend>
        <div className="mt-[3px] grid grid-cols-[115fr_216fr] items-start gap-x-[6px]">
          <Push className="h-[29px]">Configuraciones</Push>
          <Drop label="Dispositivo" value="Device---(IP:192.168.255.100)" className="mt-[3px] h-[25px]" />
        </div>
      </fieldset>
    </section>
  );
}

/* ---------- bottom bars ---------- */

const PALETTE = [
  "bg-[#000000]", "bg-[#0000ff]", "bg-[#ff0000]", "bg-[#00ff00]", "bg-[#fa8072]", "bg-[#ffff00]", "bg-[#1e90ff]", "bg-[#8b3610]", "bg-[#808000]", "bg-[#00805a]",
  "bg-[#ff4500]", "bg-[#400080]", "bg-[#ffd0dc]", "bg-[#b09ef8]", "bg-[#d8fa98]", "bg-[#ff9058]", "bg-[#db7093]", "bg-[#8870dc]", "bg-[#74de74]", "bg-[#b49e70]",
];

function Palette() {
  return (
    <div className="flex h-[42px] items-center border-t border-b-2 border-t-white border-b-[#b8b8b8]">
      <div className="flex w-[25px] shrink-0 flex-col items-center gap-2 pr-2">
        <button type="button" aria-label="Cerrar paleta"><svg width="8" height="8" viewBox="0 0 8 8"><path d="M1 1 L7 7 M7 1 L1 7" stroke="#000" strokeWidth="2" /></svg></button>
        <div className="h-[10px] w-[6px] border-x-2 border-b border-[#c4c4c4]" />
      </div>
      <div className="flex w-[635px] justify-between">
        {PALETTE.map((c, i) => <button key={c} type="button" aria-label={`Capa ${i + 1}`} className={`h-8 w-[29px] border border-[#a8a8a8] ${c}`} />)}
      </div>
    </div>
  );
}

const CELL = "h-5 border border-[#a8a8a8] pl-[2px] whitespace-nowrap leading-[18px]";

function StatusBar() {
  return (
    <footer className="flex h-[26px] items-center gap-[3px] border-t border-t-white font-['Noto_Sans',sans-serif] text-sm text-[#222]">
      <div className={`${CELL} min-w-0 flex-1 overflow-hidden`}>--- *Bienvenido a utilizar el sistema de corte laser, Proponer el area de visualizacion de 1024x768 o superior*---</div>
      <div className={`${CELL} w-[26px]`} />
      <div className={`${CELL} w-[242px] pl-1`}>General mode,Cuenta total:0</div>
      <div className={`${CELL} w-[7px]`} />
      <div className={`${CELL} w-[339px] border-r-0`}>RDC6442S,X:1013.889mm,Y:978.630mm</div>
    </footer>
  );
}

const MENUS = ["Archivo(A)", "Editar(E)", "Dibujar(D)", "Config(G)", "Operacione(O)", "Herramienta(H)", "Modelo(M)", "Ver(V)", "Ayuda(H)"];

function Gradients() {
  const lin = (id: string, a: string, b: string) => (
    <linearGradient id={id} x1="0" y1="0" x2="1" y2="1"><stop offset="0" stopColor={a} /><stop offset="1" stopColor={b} /></linearGradient>
  );
  return (
    <svg width="0" height="0" className="absolute" aria-hidden="true">
      <defs>
        {lin("pageFill", "#f6fbff", "#9fcdf5")}
        {lin("folderFill", "#ffe9a0", "#f0b93a")}
        {lin("lensFill", "#f4f9ff", "#9cc4ee")}
        {lin("greenDisc", "#8fd0a0", "#1a8a35")}
        {lin("grayDisc", "#8a8a8a", "#3c3c3c")}
        {lin("screen", "#7fd8f5", "#0a98cc")}
        {lin("cursor", "#ffffff", "#9fdcb8")}
        {lin("cursorBlue", "#ffffff", "#a8aee0")}
        {lin("gold", "#ffd21a", "#ffc400")}
        {lin("darkBox", "#6e6e6e", "#3a3a3a")}
        <radialGradient id="ball" cx=".4" cy=".35" r=".7"><stop offset="0" stopColor="#ff5a3c" /><stop offset=".5" stopColor="#c80a0a" /><stop offset="1" stopColor="#500" /></radialGradient>
      </defs>
    </svg>
  );
}

export default function App() {
  return (
    <div className="flex h-screen flex-col overflow-hidden bg-[#f0f0f0] text-[#222]">
      <Gradients />
      <header className="flex h-[29px] shrink-0 items-center bg-[#f3f3f3] font-['Noto_Sans',sans-serif] text-sm text-[#858585]">
        <svg width="20" height="20" viewBox="0 0 20 20" className="ml-[2px]">
          <path d="M9 0 h2 l1 7 h-4z M0 9 L7 6 h6 l7 3 L17 12 H3z" fill="#e81010" />
          <path d="M3 12 h4 v5z M17 12 h-4 v5z M8 12 h4 l-1 8 h-2z" fill="#e81010" />
          <path d="M1 11 H19" stroke="#f3f3f3" strokeWidth=".8" />
        </svg>
        <h1 className="ml-[6px] flex-1">RDWorksV8.01.60-20211201-[Sin nombre-]</h1>
        <div className="flex">
          <button type="button" aria-label="Minimizar" className="flex w-[58px] justify-center"><svg width="12" height="12"><path d="M0 6.500 H12" stroke="#888" /></svg></button>
          <button type="button" aria-label="Restaurar" className="flex w-[58px] justify-center"><svg width="14" height="14" fill="none" stroke="#888"><rect x="1.500" y="3.500" width="9" height="9" rx="1.500" /><path d="M4 3 Q4 1.500 5.500 1.500 H10 Q12.500 1.500 12.500 4 V8.500 Q12.500 10 11 10" /></svg></button>
          <button type="button" aria-label="Cerrar" className="mr-[2px] flex w-[60px] justify-center"><svg width="13" height="13"><path d="M.5 .5 L12.500 12.500 M12.500 .5 L.5 12.500" stroke="#888" /></svg></button>
        </div>
      </header>
      <nav className="flex h-[25px] shrink-0 items-center gap-[2px] bg-white pb-[1px] font-['Noto_Sans',sans-serif] text-sm text-[#777]">
        {MENUS.map((m) => <button key={m} type="button" className="px-[9px]">{m}</button>)}
      </nav>
      <MainToolbar />
      <EditToolbar />
      <CoordBar />
      <PathBar />
      <main className="flex min-h-0 flex-1">
        <SideTools />
        <Workspace />
        <aside className={`${UI} flex w-[415px] shrink-0 flex-col border-l border-l-white text-[13px]`}>
          <LayerPanel />
          <WorkPanel />
        </aside>
      </main>
      <Palette />
      <StatusBar />
    </div>
  );
}
